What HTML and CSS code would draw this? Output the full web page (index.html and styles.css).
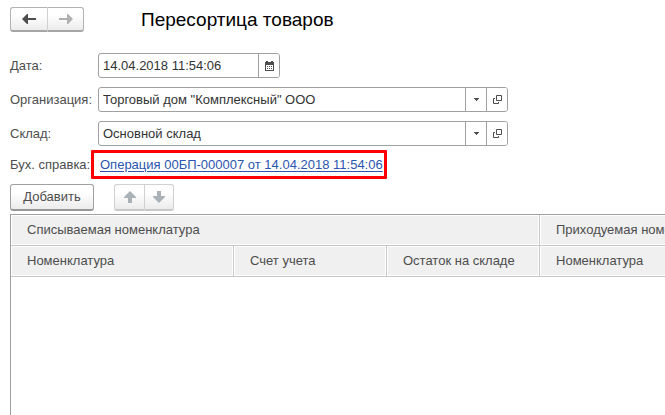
FILE: index.html
```html
<!DOCTYPE html>
<html lang="ru">
<head>
<meta charset="utf-8">
<title>Пересортица товаров</title>
<link rel="stylesheet" href="styles.css">
</head>
<body>
<main class="page">
  <header class="header">
    <div class="button-group">
      <button class="btn nav" type="button" aria-label="Назад"><svg width="14" height="10" viewBox="0 0 14 10"><path d="M0 5 5 0H6V4H14V6H6V10H5Z" fill="#4d4d4d"/></svg></button>
      <button class="btn nav" type="button" aria-label="Вперед"><svg width="14" height="10" viewBox="0 0 14 10"><path d="M14 5 9 0H8V4H0V6H8V10H9Z" fill="#b0b0b0"/></svg></button>
    </div>
    <h1 class="title">Пересортица товаров</h1>
  </header>

  <form class="form">
    <label class="label" for="date">Дата:</label>
    <div class="field field-date">
      <input class="input" id="date" type="text" value="14.04.2018 11:54:06">
      <button class="field-btn" type="button" aria-label="Выбрать дату"><svg width="9" height="10" viewBox="0 0 9 10"><path d="M1 0H3V1H6V0H8V1H9V10H0V1H1Z" fill="#4d4d4d"/><path d="M1 4H8V9H1Z" fill="#fff"/><path d="M2 5h1v1H2zM4 5h1v1H4zM6 5h1v1H6zM2 7h1v1H2zM4 7h1v1H4zM6 7h1v1H6z" fill="#4d4d4d"/></svg></button>
    </div>

    <label class="label" for="org">Организация:</label>
    <div class="field">
      <input class="input" id="org" type="text" value="Торговый дом &quot;Комплексный&quot; ООО">
      <button class="field-btn" type="button" aria-label="Выбрать организацию"><svg width="5" height="3" viewBox="0 0 5 3"><path d="M0 0H5V1H4V2H3V3H2V2H1V1H0Z" fill="#4d4d4d"/></svg></button>
      <button class="field-btn" type="button" aria-label="Открыть организацию"><svg width="9" height="9" viewBox="0 0 9 9"><path d="M3.5 .5H8.5V5.5H3.5ZM2 3.5H.5V8.5H5.5V7" fill="none" stroke="#4d4d4d"/></svg></button>
    </div>

    <label class="label" for="store">Склад:</label>
    <div class="field">
      <input class="input" id="store" type="text" value="Основной склад">
      <button class="field-btn" type="button" aria-label="Выбрать склад"><svg width="5" height="3" viewBox="0 0 5 3"><path d="M0 0H5V1H4V2H3V3H2V2H1V1H0Z" fill="#4d4d4d"/></svg></button>
      <button class="field-btn" type="button" aria-label="Открыть склад"><svg width="9" height="9" viewBox="0 0 9 9"><path d="M3.5 .5H8.5V5.5H3.5ZM2 3.5H.5V8.5H5.5V7" fill="none" stroke="#4d4d4d"/></svg></button>
    </div>
  </form>

  <div class="reference">
    <span class="label reference-label">Бух. справка:</span>
    <div class="highlight"><a class="link" href="#">Операция 00БП-000007 от 14.04.2018 11:54:06</a></div>
  </div>

  <div class="toolbar">
    <button class="btn add" type="button">Добавить</button>
    <div class="button-group disabled">
      <button class="btn move" type="button" aria-label="Вверх"><svg width="12" height="12" viewBox="0 0 12 12"><path d="M6 0 12 6V7H8V12H4V7H0V6Z" fill="#abb2b7"/></svg></button>
      <button class="btn move" type="button" aria-label="Вниз"><svg width="12" height="12" viewBox="0 0 12 12"><path d="M6 12 12 6V5H8V0H4V5H0V6Z" fill="#abb2b7"/></svg></button>
    </div>
  </div>

  <div class="table-area">
    <table class="table">
      <colgroup><col class="col-wide"><col class="col"><col class="col"><col class="col-wide"><col class="col"></colgroup>
      <thead>
        <tr><th colspan="3">Списываемая номенклатура</th><th colspan="2">Приходуемая номенклатура</th></tr>
        <tr><th>Номенклатура</th><th>Счет учета</th><th>Остаток на складе</th><th>Номенклатура</th><th></th></tr>
      </thead>
    </table>
  </div>
</main>
</body>
</html>
```
FILE: styles.css
```css
* {
  box-sizing: border-box;
}

body {
  margin: 0;
  background: #fff;
  color: #4d4d4d;
  font: 13px/16px "Liberation Sans", Arial, sans-serif;
}

button,
input {
  margin: 0;
  padding: 0;
  font: inherit;
  color: inherit;
}

svg {
  display: block;
}

.page {
  display: flex;
  flex-direction: column;
  min-height: 100vh;
  padding: 7px 0 0 10px;
  overflow: hidden;
}

.header {
  display: flex;
  align-items: center;
  gap: 57px;
  margin-bottom: 21px;
}

.title {
  margin: 0;
  color: #000;
  font-size: 19px;
  font-weight: normal;
  line-height: 24px;
}

.button-group {
  display: flex;
}

.btn {
  display: flex;
  align-items: center;
  justify-content: center;
  border: 1px solid #a0a0a0;
  border-bottom: 2px solid #989898;
  border-radius: 3px;
  background: linear-gradient(#fff 30%, #ececec);
}

.nav {
  width: 37px;
  height: 25px;
  border-color: #b3b3b3;
  border-bottom-color: #a6a6a6;
}

.nav + .nav {
  border-left-color: #d0d0d0;
}

.button-group .btn:first-child {
  border-right: 0;
  border-radius: 3px 0 0 3px;
}

.button-group .btn:last-child {
  border-radius: 0 3px 3px 0;
}

.form {
  display: grid;
  grid-template-columns: 88px minmax(0, 410px);
  align-items: center;
  row-gap: 9px;
  margin-bottom: 4px;
}

.label {
  white-space: nowrap;
}

.field {
  display: flex;
  height: 25px;
  border: 1px solid #a0a0a0;
  border-radius: 3px;
  background: #fff;
  overflow: hidden;
}

.field-date {
  width: 182px;
}

.input {
  flex: 1;
  min-width: 0;
  padding-left: 4px;
  border: 0;
  outline: 0;
  background: none;
  color: #333;
}

.field-btn {
  display: flex;
  align-items: center;
  justify-content: center;
  width: 21px;
  border: 0;
  border-left: 1px solid #a0a0a0;
  background: #fff;
}

.reference {
  display: flex;
  align-items: center;
  margin-bottom: 5px;
}

.reference-label {
  width: 81px;
}

.highlight {
  padding: 0 1px 0 6px;
  border: 3px solid #f00;
  border-radius: 1px;
}

.link {
  display: block;
  color: #2a55b0;
  line-height: 23px;
  text-underline-offset: 2px;
  white-space: nowrap;
}

.toolbar {
  display: flex;
  gap: 20px;
  margin-bottom: 3px;
}

.add {
  width: 84px;
  height: 27px;
}

.move {
  width: 30px;
  height: 27px;
}

.disabled .btn {
  border-color: #d0d0d0;
  border-bottom-color: #c8c8c8;
}

.disabled .btn:last-child {
  border-left-color: #d0d0d0;
}

.table-area {
  flex: 1;
  border-top: 1px solid #a0a0a0;
  border-left: 1px solid #a0a0a0;
  overflow: hidden;
}

.table {
  width: 905px;
  border-spacing: 0;
  table-layout: fixed;
}

.col-wide {
  width: 223px;
}

.col {
  width: 153px;
}

.table th {
  height: 31px;
  padding: 0 16px;
  border-right: 1px solid #c8c8c8;
  border-bottom: 1px solid #c8c8c8;
  background: #f0f0f0;
  box-shadow: inset 0 0 0 1px #fff;
  font-weight: normal;
  text-align: left;
  white-space: nowrap;
}
```
